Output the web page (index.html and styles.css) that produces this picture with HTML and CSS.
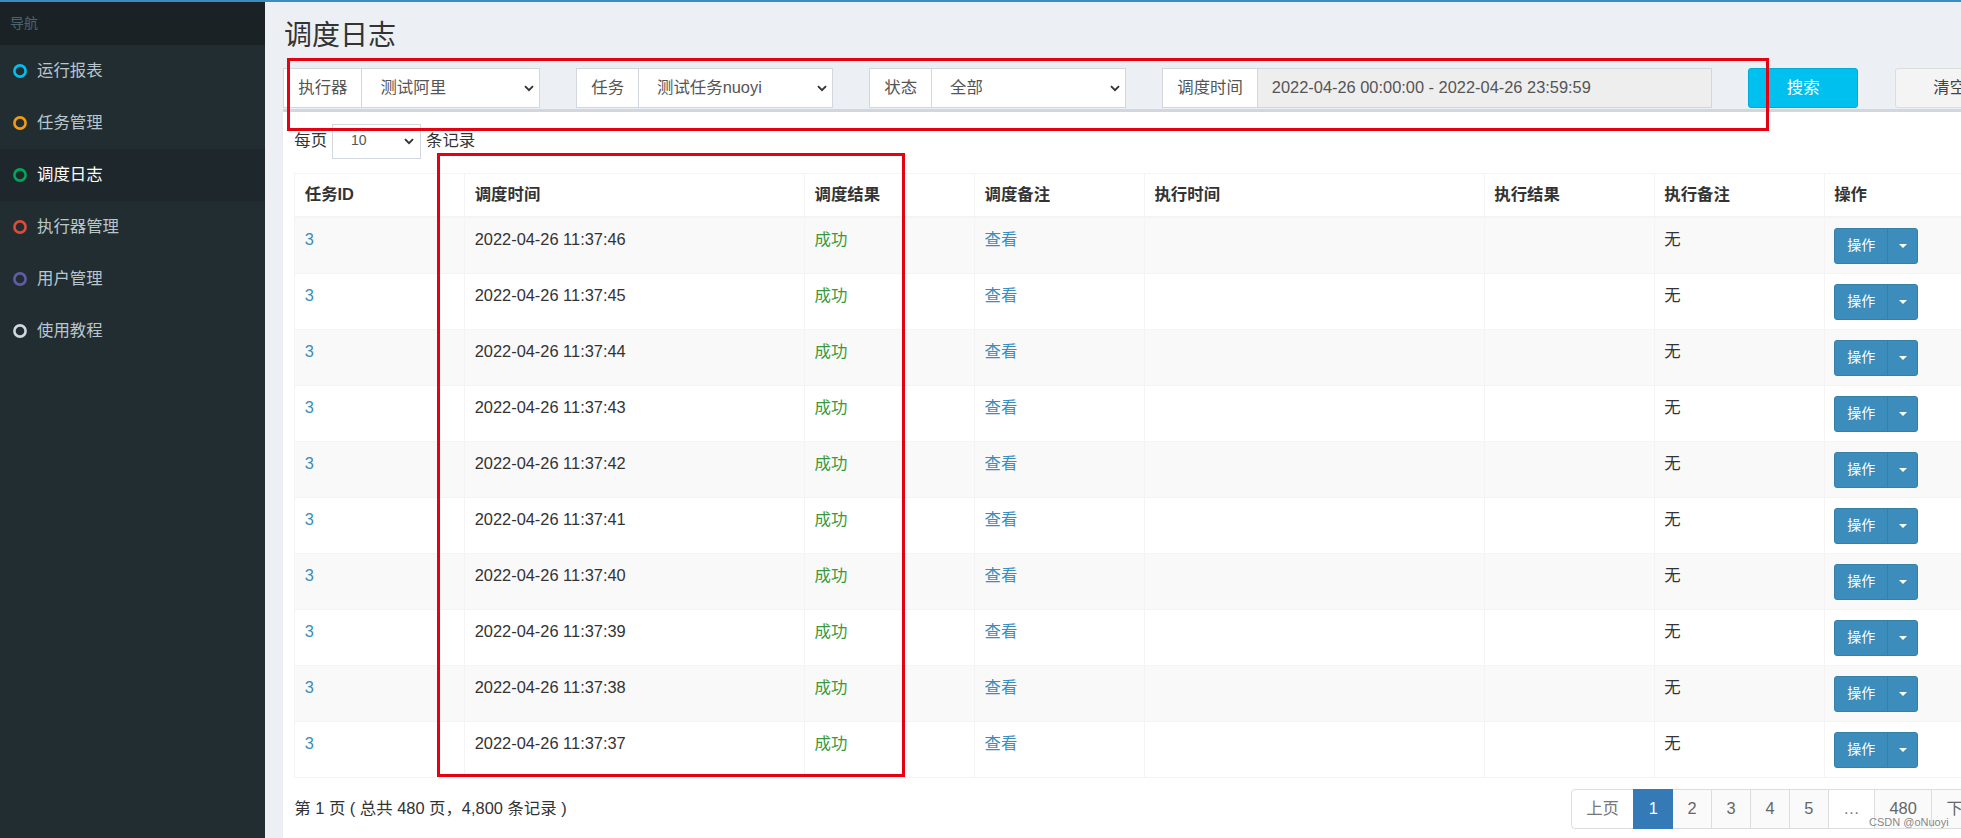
FILE: index.html
```html
<!DOCTYPE html>
<html lang="zh-CN">
<head>
<meta charset="utf-8">
<title>调度日志</title>
<link rel="stylesheet" href="styles.css">
</head>
<body>
<div class="topline"></div>
<div class="layout">
  <aside class="sidebar">
    <div class="nav-header">导航</div>
    <div class="nav-item"><svg class="nav-icon" viewBox="0 0 14 14"><circle cx="7" cy="7" r="5.6" fill="none" stroke="#00c0ef" stroke-width="2.6"/></svg><span>运行报表</span></div>
    <div class="nav-item"><svg class="nav-icon" viewBox="0 0 14 14"><circle cx="7" cy="7" r="5.6" fill="none" stroke="#f39c12" stroke-width="2.6"/></svg><span>任务管理</span></div>
    <div class="nav-item active"><svg class="nav-icon" viewBox="0 0 14 14"><circle cx="7" cy="7" r="5.6" fill="none" stroke="#00a65a" stroke-width="2.6"/></svg><span>调度日志</span></div>
    <div class="nav-item"><svg class="nav-icon" viewBox="0 0 14 14"><circle cx="7" cy="7" r="5.6" fill="none" stroke="#dd4b39" stroke-width="2.6"/></svg><span>执行器管理</span></div>
    <div class="nav-item"><svg class="nav-icon" viewBox="0 0 14 14"><circle cx="7" cy="7" r="5.6" fill="none" stroke="#605ca8" stroke-width="2.6"/></svg><span>用户管理</span></div>
    <div class="nav-item"><svg class="nav-icon" viewBox="0 0 14 14"><circle cx="7" cy="7" r="5.6" fill="none" stroke="#d2d6de" stroke-width="2.6"/></svg><span>使用教程</span></div>
  </aside>

  <main class="main">
    <h1 class="page-title">调度日志</h1>

    <div class="filters">
      <div class="fcol">
        <div class="igroup">
          <span class="addon">执行器</span>
          <div class="fselect"><span>测试阿里</span><svg class="chev" viewBox="0 0 10 7"><polyline points="1,1.2 5,5.2 9,1.2" fill="none" stroke="#333" stroke-width="1.9"/></svg></div>
        </div>
      </div>
      <div class="fcol">
        <div class="igroup">
          <span class="addon">任务</span>
          <div class="fselect"><span>测试任务nuoyi</span><svg class="chev" viewBox="0 0 10 7"><polyline points="1,1.2 5,5.2 9,1.2" fill="none" stroke="#333" stroke-width="1.9"/></svg></div>
        </div>
      </div>
      <div class="fcol">
        <div class="igroup">
          <span class="addon">状态</span>
          <div class="fselect"><span>全部</span><svg class="chev" viewBox="0 0 10 7"><polyline points="1,1.2 5,5.2 9,1.2" fill="none" stroke="#333" stroke-width="1.9"/></svg></div>
        </div>
      </div>
      <div class="fcol">
        <div class="igroup">
          <span class="addon">调度时间</span>
          <div class="finput">2022-04-26 00:00:00 - 2022-04-26 23:59:59</div>
        </div>
      </div>
      <div class="fcol"><div class="btn btn-search">搜索</div></div>
      <div class="fcol"><div class="btn btn-clear">清空</div></div>
    </div>

    <section class="box">
      <div class="box-body">
        <div class="length">
          <span>每页</span>
          <div class="lselect"><span>10</span><svg class="chev" viewBox="0 0 10 7"><polyline points="1,1.2 5,5.2 9,1.2" fill="none" stroke="#333" stroke-width="1.9"/></svg></div>
          <span>条记录</span>
        </div>

        <table class="tbl">
          <colgroup>
            <col class="c10"><col class="c20"><col class="c10"><col class="c10"><col class="c20"><col class="c10"><col class="c10"><col class="c10">
          </colgroup>
          <thead>
            <tr><th>任务ID</th><th>调度时间</th><th>调度结果</th><th>调度备注</th><th>执行时间</th><th>执行结果</th><th>执行备注</th><th>操作</th></tr>
          </thead>
          <tbody>
            <tr><td class="link">3</td><td>2022-04-26 11:37:46</td><td class="ok">成功</td><td class="link">查看</td><td></td><td></td><td>无</td><td><div class="opbtn"><span class="op-main">操作</span><span class="op-caret"><i class="caret"></i></span></div></td></tr>
            <tr><td class="link">3</td><td>2022-04-26 11:37:45</td><td class="ok">成功</td><td class="link">查看</td><td></td><td></td><td>无</td><td><div class="opbtn"><span class="op-main">操作</span><span class="op-caret"><i class="caret"></i></span></div></td></tr>
            <tr><td class="link">3</td><td>2022-04-26 11:37:44</td><td class="ok">成功</td><td class="link">查看</td><td></td><td></td><td>无</td><td><div class="opbtn"><span class="op-main">操作</span><span class="op-caret"><i class="caret"></i></span></div></td></tr>
            <tr><td class="link">3</td><td>2022-04-26 11:37:43</td><td class="ok">成功</td><td class="link">查看</td><td></td><td></td><td>无</td><td><div class="opbtn"><span class="op-main">操作</span><span class="op-caret"><i class="caret"></i></span></div></td></tr>
            <tr><td class="link">3</td><td>2022-04-26 11:37:42</td><td class="ok">成功</td><td class="link">查看</td><td></td><td></td><td>无</td><td><div class="opbtn"><span class="op-main">操作</span><span class="op-caret"><i class="caret"></i></span></div></td></tr>
            <tr><td class="link">3</td><td>2022-04-26 11:37:41</td><td class="ok">成功</td><td class="link">查看</td><td></td><td></td><td>无</td><td><div class="opbtn"><span class="op-main">操作</span><span class="op-caret"><i class="caret"></i></span></div></td></tr>
            <tr><td class="link">3</td><td>2022-04-26 11:37:40</td><td class="ok">成功</td><td class="link">查看</td><td></td><td></td><td>无</td><td><div class="opbtn"><span class="op-main">操作</span><span class="op-caret"><i class="caret"></i></span></div></td></tr>
            <tr><td class="link">3</td><td>2022-04-26 11:37:39</td><td class="ok">成功</td><td class="link">查看</td><td></td><td></td><td>无</td><td><div class="opbtn"><span class="op-main">操作</span><span class="op-caret"><i class="caret"></i></span></div></td></tr>
            <tr><td class="link">3</td><td>2022-04-26 11:37:38</td><td class="ok">成功</td><td class="link">查看</td><td></td><td></td><td>无</td><td><div class="opbtn"><span class="op-main">操作</span><span class="op-caret"><i class="caret"></i></span></div></td></tr>
            <tr><td class="link">3</td><td>2022-04-26 11:37:37</td><td class="ok">成功</td><td class="link">查看</td><td></td><td></td><td>无</td><td><div class="opbtn"><span class="op-main">操作</span><span class="op-caret"><i class="caret"></i></span></div></td></tr>
          </tbody>
        </table>

        <div class="foot">
          <div class="info">第 1 页 ( 总共 480 页，4,800 条记录 )</div>
          <div class="pager">
            <span class="pg disabled first">上页</span>
            <span class="pg active">1</span>
            <span class="pg">2</span>
            <span class="pg">3</span>
            <span class="pg">4</span>
            <span class="pg">5</span>
            <span class="pg disabled">…</span>
            <span class="pg">480</span>
            <span class="pg last">下页</span>
          </div>
        </div>
      </div>
    </section>
  </main>
</div>

<div class="anno anno-filter"></div>
<div class="anno anno-cols"></div>
<div class="watermark">CSDN @oNuoyi</div>
</body>
</html>
```

FILE: styles.css
```css
* { box-sizing: border-box; }
html, body { margin: 0; padding: 0; }
body {
  width: 1961px;
  height: 838px;
  overflow: hidden;
  position: relative;
  background: #ecf0f5;
  font-family: "Liberation Sans", "Noto Sans CJK SC", sans-serif;
  font-size: 16.4px;
  line-height: 23.4px;
  color: #333;
}

.topline { height: 2px; background: #3c8dbc; width: 100%; }

.layout { display: flex; width: 2024px; height: 836px; }

/* sidebar */
.sidebar { width: 265px; flex: none; background: #222d32; }
.nav-header {
  height: 43px;
  background: #1a2226;
  color: #4b646f;
  font-size: 14px;
  padding-left: 10px;
  display: flex;
  align-items: center;
}
.nav-item {
  height: 52px;
  display: flex;
  align-items: center;
  color: #b8c7ce;
  padding-left: 13px;
}
.nav-item.active { background: #1e282c; color: #fff; }
.nav-icon { width: 14px; height: 14px; margin-right: 10px; flex: none; }

/* main */
.main { width: 1759px; flex: none; }
.page-title {
  margin: 0;
  height: 66px;
  line-height: 68px;
  font-size: 28px;
  font-weight: normal;
  padding-left: 19px;
  color: #333;
}

.filters {
  display: grid;
  grid-template-columns: 2fr 2fr 2fr 4fr 1fr 1fr;
  width: 1758px;
  height: 40px;
}
.fcol { padding: 0 18.3px; }
.igroup { display: flex; height: 40px; }
.addon {
  border: 1px solid #d2d6de;
  border-right: 0;
  background: #fff;
  padding: 0 14px;
  display: flex;
  align-items: center;
  color: #555;
  white-space: nowrap;
}
.fselect {
  flex: 1;
  border: 1px solid #d2d6de;
  background: #fff;
  display: flex;
  align-items: center;
  justify-content: space-between;
  padding: 0 5px 0 18px;
  color: #555;
}
.chev { width: 10px; height: 7px; flex: none; }
.finput {
  flex: 1;
  border: 1px solid #d2d6de;
  background: #eee;
  padding: 0 14px;
  display: flex;
  align-items: center;
  color: #555;
  white-space: nowrap;
}
.btn {
  height: 40px;
  width: 100%;
  border-radius: 3px;
  display: flex;
  align-items: center;
  justify-content: center;
  white-space: nowrap;
}
.btn-search { background: #00c0ef; border: 1px solid #00acd6; color: #fff; }
.btn-clear { background: #f4f4f4; border: 1px solid #ddd; color: #444; }

/* box */
.box {
  margin: 1px 17.6px 0;
  border-top: 3px solid #d2d6de;
  background: #fff;
  box-shadow: 0 1px 1px rgba(0, 0, 0, 0.1);
  height: 740px;
}
.box-body { padding: 11.7px; }

.length { display: flex; align-items: center; height: 35px; gap: 5px; }
.lselect {
  width: 89px;
  height: 35px;
  border: 1px solid #d2d6de;
  display: flex;
  align-items: center;
  justify-content: space-between;
  padding: 0 6px 0 18px;
  font-size: 14px;
  color: #555;
}

.tbl {
  width: 100%;
  border-collapse: collapse;
  table-layout: fixed;
  margin-top: 14px;
}
.c10 { width: 10%; }
.c20 { width: 20%; }
.tbl th, .tbl td {
  border: 1px solid #f4f4f4;
  padding: 9.5px;
  text-align: left;
  vertical-align: top;
  white-space: nowrap;
}
.tbl th { border-bottom-width: 2px; font-weight: bold; color: #333; }
.tbl tbody tr:nth-child(odd) { background: #f9f9f9; }
.tbl td.link { color: #3c8dbc; }
.tbl td.ok { color: #3a9a3a; }

.opbtn {
  display: inline-flex;
  height: 36px;
  border-radius: 3px;
  background: #3c8dbc;
  border: 1px solid #367fa9;
  color: #fff;
  font-size: 14px;
}
.op-main {
  display: flex;
  align-items: center;
  padding: 0 12px;
  border-right: 1px solid #367fa9;
}
.op-caret {
  display: flex;
  align-items: center;
  justify-content: center;
  width: 29px;
}
.caret {
  width: 0;
  height: 0;
  border-left: 4.5px solid transparent;
  border-right: 4.5px solid transparent;
  border-top: 4.5px solid #fff;
}

.foot {
  display: flex;
  justify-content: space-between;
  align-items: center;
  margin-top: 11px;
}
.info { color: #333; white-space: nowrap; }
.pager { display: flex; }
.pg {
  padding: 7px 14.4px;
  border: 1px solid #ddd;
  margin-left: -1px;
  background: #fafafa;
  color: #666;
  line-height: 23.4px;
  white-space: nowrap;
}
.pg.first { margin-left: 0; border-radius: 4px 0 0 4px; }
.pg.last { border-radius: 0 4px 4px 0; }
.pg.disabled { background: #fff; color: #777; }
.pg.active { background: #337ab7; border-color: #337ab7; color: #fff; position: relative; }

/* annotation overlays */
.anno { position: absolute; border: 3px solid #e60012; }
.anno-filter { left: 287px; top: 58px; width: 1482px; height: 73px; }
.anno-cols { left: 437px; top: 153px; width: 468px; height: 624px; }

.watermark {
  position: absolute;
  left: 1869px;
  top: 815px;
  font-size: 11px;
  line-height: 14px;
  color: rgba(110, 110, 110, 0.85);
  white-space: nowrap;
}
```
